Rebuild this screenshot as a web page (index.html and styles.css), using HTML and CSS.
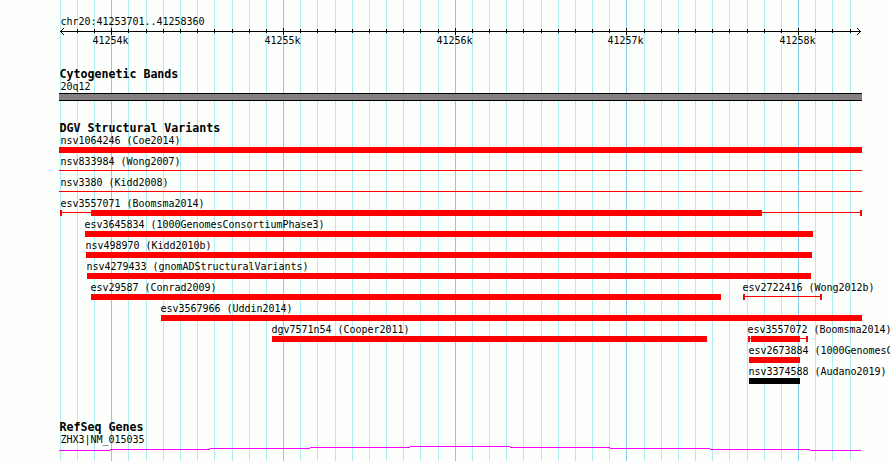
FILE: index.html
```
<!DOCTYPE html>
<html lang="en">
<head>
    <meta charset="UTF-8">
    <title>chr20:41253701..41258360</title>
    <link rel="stylesheet" href="styles.css">
</head>
<body>
    <div class="browser">
        <svg class="grid" width="890" height="461" shape-rendering="crispEdges">
            <path class="minor" d="M60.5 0v461M77.5 0v461M94.5 0v461M128.5 0v461M146.5 0v461M163.5 0v461M180.5 0v461M197.5 0v461M214.5 0v461M232.5 0v461M249.5 0v461M266.5 0v461M300.5 0v461M317.5 0v461M335.5 0v461M352.5 0v461M369.5 0v461M386.5 0v461M403.5 0v461M420.5 0v461M438.5 0v461M472.5 0v461M489.5 0v461M506.5 0v461M523.5 0v461M541.5 0v461M558.5 0v461M575.5 0v461M592.5 0v461M609.5 0v461M644.5 0v461M661.5 0v461M678.5 0v461M695.5 0v461M712.5 0v461M729.5 0v461M747.5 0v461M764.5 0v461M781.5 0v461M815.5 0v461M832.5 0v461M850.5 0v461"/>
            <path class="major" d="M111.5 0v461M283.5 0v461M455.5 0v461M626.5 0v461M798.5 0v461"/>
        </svg>

        <div class="ruler">
            <div class="label region">chr20:41253701..41258360</div>
            <svg class="scale" width="890" height="22" shape-rendering="crispEdges">
                <path class="axis" d="M60 4.5H861"/>
                <path class="axis" d="M77.5 2v4M94.5 2v4M128.5 2v4M146.5 2v4M163.5 2v4M180.5 2v4M197.5 2v4M214.5 2v4M232.5 2v4M249.5 2v4M266.5 2v4M300.5 2v4M317.5 2v4M335.5 2v4M352.5 2v4M369.5 2v4M386.5 2v4M403.5 2v4M420.5 2v4M438.5 2v4M472.5 2v4M489.5 2v4M506.5 2v4M523.5 2v4M541.5 2v4M558.5 2v4M575.5 2v4M592.5 2v4M609.5 2v4M644.5 2v4M661.5 2v4M678.5 2v4M695.5 2v4M712.5 2v4M729.5 2v4M747.5 2v4M764.5 2v4M781.5 2v4M815.5 2v4M832.5 2v4M850.5 2v4"/>
                <path class="axis" d="M111.5 1v7M283.5 1v7M455.5 1v7M626.5 1v7M798.5 1v7"/>
                <path d="M60 4h1v1h-1zM61 3h1v3h-1zM62 2h1v1h-1zM62 6h1v1h-1zM63 1h1v1h-1zM63 7h1v1h-1z"/>
                <path d="M860 4h1v1h-1zM859 3h1v3h-1zM858 2h1v1h-1zM858 6h1v1h-1zM857 1h1v1h-1zM857 7h1v1h-1z"/>
                <text x="92.6" y="17">41254k</text>
                <text x="264.6" y="17">41255k</text>
                <text x="436.6" y="17">41256k</text>
                <text x="607.6" y="17">41257k</text>
                <text x="779.6" y="17">41258k</text>
            </svg>
        </div>

        <div class="track cytoband">
            <h2 class="title">Cytogenetic Bands</h2>
            <div class="label">20q12</div>
            <div class="band"></div>
        </div>

        <div class="track variants">
            <h2 class="title">DGV Structural Variants</h2>
            <div class="row">
                <div class="feature clipped" style="margin-left: 59px; width: 803px"><div class="label">nsv1064246 (Coe2014)</div><div class="bar"></div></div>
            </div>
            <div class="row">
                <div class="feature clipped" style="margin-left: 59px; width: 803px"><div class="label">nsv833984 (Wong2007)</div><div class="line"></div></div>
            </div>
            <div class="row">
                <div class="feature clipped" style="margin-left: 59px; width: 803px"><div class="label">nsv3380 (Kidd2008)</div><div class="line"></div></div>
            </div>
            <div class="row">
                <div class="feature clipped" style="margin-left: 60px; width: 802px"><div class="label flush">esv3557071 (Boomsma2014)</div><div class="line capped"><div class="bar" style="margin-left: 29px; width: 671px"></div></div></div>
            </div>
            <div class="row">
                <div class="feature" style="margin-left: 85px; width: 728px"><div class="label">esv3645834 (1000GenomesConsortiumPhase3)</div><div class="bar"></div></div>
            </div>
            <div class="row">
                <div class="feature" style="margin-left: 86px; width: 726px"><div class="label">nsv498970 (Kidd2010b)</div><div class="bar"></div></div>
            </div>
            <div class="row">
                <div class="feature" style="margin-left: 87px; width: 724px"><div class="label">nsv4279433 (gnomADStructuralVariants)</div><div class="bar"></div></div>
            </div>
            <div class="row">
                <div class="feature" style="margin-left: 91px; width: 630px"><div class="label">esv29587 (Conrad2009)</div><div class="bar"></div></div>
                <div class="feature" style="margin-left: 743px; width: 79px"><div class="label">esv2722416 (Wong2012b)</div><div class="line capped"></div></div>
            </div>
            <div class="row">
                <div class="feature" style="margin-left: 161px; width: 701px"><div class="label">esv3567966 (Uddin2014)</div><div class="bar"></div></div>
            </div>
            <div class="row">
                <div class="feature" style="margin-left: 272px; width: 435px"><div class="label">dgv7571n54 (Cooper2011)</div><div class="bar"></div></div>
                <div class="feature" style="margin-left: 748px; width: 60px"><div class="label">esv3557072 (Boomsma2014)</div><div class="line capped"><div class="bar" style="margin-left: 1px; width: 49px"></div></div></div>
            </div>
            <div class="row">
                <div class="feature" style="margin-left: 749px; width: 51px"><div class="label">esv2673884 (1000GenomesConsortiumPhase1)</div><div class="bar"></div></div>
            </div>
            <div class="row">
                <div class="feature" style="margin-left: 749px; width: 51px"><div class="label">nsv3374588 (Audano2019)</div><div class="bar inversion"></div></div>
            </div>
        </div>

        <div class="track genes">
            <h2 class="title">RefSeq Genes</h2>
            <div class="label">ZHX3|NM_015035</div>
            <svg class="intron" width="890" height="6" shape-rendering="crispEdges">
                <path d="M59 4.5h51M110 3.5h100M210 2.5h100M310 1.5h100M410 .5h100M510 1.5h100M610 2.5h100M710 3.5h100M810 4.5h51"/>
            </svg>
        </div>
    </div>
</body>
</html>
```
FILE: styles.css
```
body {
    margin: 0;
    background-color: #fdfffc;
    color: #000;
    font-family: "DejaVu Sans Mono", monospace;
    font-size: 10px;
}

.browser {
    position: relative;
    width: 890px;
    height: 461px;
    overflow: hidden;
}

/* grid lines run behind every track */
.grid {
    position: absolute;
    top: 0;
    left: 0;
    z-index: -1;
}

.minor {
    stroke: #afeeee;
}

.major {
    stroke: #87ceeb;
}

.label {
    height: 13px;
    margin-left: 60px;
    line-height: 13px;
    letter-spacing: -0.02px;
    text-indent: 0.6px;
    white-space: nowrap;
}

.title {
    height: 12px;
    margin: 0 0 0 59px;
    font-size: 11.63px;
    font-weight: bold;
    line-height: 12px;
    text-indent: 0.4px;
    white-space: nowrap;
}

.ruler {
    height: 68px;
    padding-top: 15px;
    box-sizing: border-box;
}

.region {
    height: 12px;
}

.scale {
    display: block;
    letter-spacing: -0.02px;
}

.axis {
    stroke: #000;
}

.cytoband {
    height: 54px;
}

.band {
    width: 803px;
    height: 8px;
    margin-left: 59px;
    box-sizing: border-box;
    border-top: 1px solid #000;
    border-bottom: 1px solid #000;
    background-color: #848082;
}

.variants {
    height: 299px;
}

.row {
    display: grid;
    height: 21px;
}

.feature {
    grid-area: 1 / 1;
}

.feature .label {
    margin-left: -1px;
}

.clipped .label {
    margin-left: 1px;
}

.clipped .flush {
    margin-left: 0;
}

.bar {
    height: 6px;
    background-color: #f00;
}

.inversion {
    background-color: #000;
}

.line {
    height: 6px;
    background: linear-gradient(#f00, #f00) 0 2px / 100% 1px no-repeat;
}

.capped {
    box-sizing: border-box;
    border-left: 2px solid #f00;
    border-right: 2px solid #f00;
}

.intron {
    display: block;
}

.intron path {
    stroke: #f0f;
}
```
